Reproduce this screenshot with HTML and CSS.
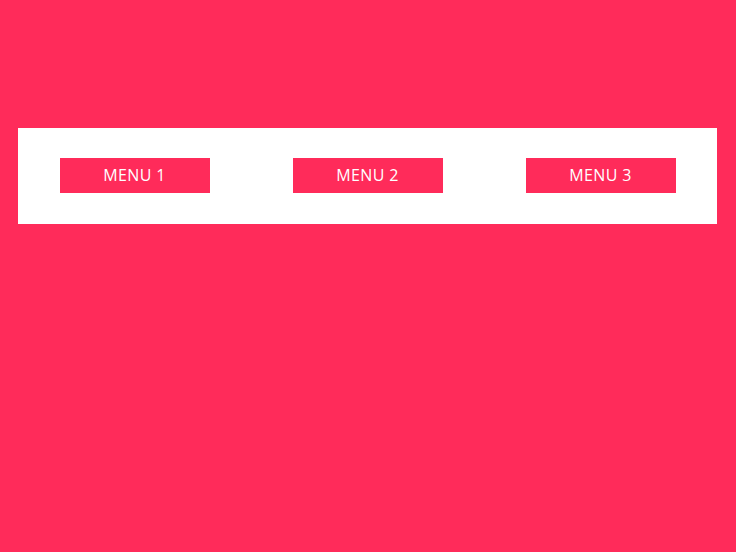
FILE: index.html
```html
<!DOCTYPE html>
<html>
<head>
<meta charset="utf-8">
<link rel="stylesheet" href="styles.css">
</head>
<body>
<nav class="menu-bar">
  <div class="cell"><a class="btn" href="#">MENU 1</a></div>
  <div class="cell"><a class="btn" href="#">MENU 2</a></div>
  <div class="cell"><a class="btn" href="#">MENU 3</a></div>
</nav>
</body>
</html>
```
FILE: styles.css
```css
html, body {
  margin: 0;
  height: 100%;
}
body {
  background: #ff2b5a;
  padding: 128px 19px 0 18px;
  box-sizing: border-box;
  font-family: "Open Sans", "Liberation Sans", sans-serif;
}
.menu-bar {
  background: #ffffff;
  padding: 30px 0 31px;
  display: grid;
  grid-template-columns: 1fr 1fr 1fr;
}
.cell {
  display: flex;
  justify-content: center;
}
.btn {
  display: flex;
  align-items: center;
  justify-content: center;
  box-sizing: border-box;
  width: 150px;
  height: 35px;
  padding-bottom: 2px;
  background: #ff2b5a;
  color: #ffffff;
  text-decoration: none;
  font-size: 16px;
  letter-spacing: 0.4px;
}
```
